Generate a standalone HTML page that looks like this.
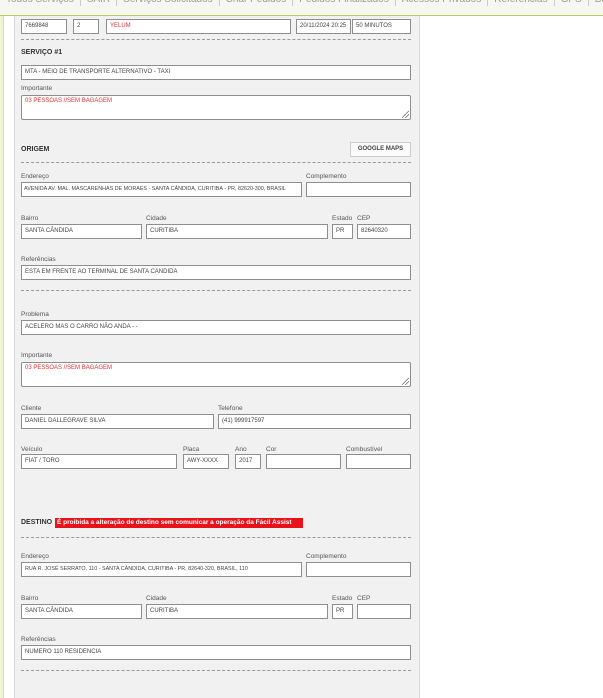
<!DOCTYPE html>
<html><head><meta charset="utf-8"><style>
*{box-sizing:border-box;margin:0;padding:0}
body{width:603px;height:698px;overflow:hidden;background:#fff;font-family:"Liberation Sans",sans-serif;position:relative}
.strip{position:absolute;left:0;top:0;width:4px;height:698px;background:#eef5d3;border-right:1px solid #d6e2a0}
.panel{position:absolute;left:14px;top:0;width:406px;height:698px;background:#f1f1f1;border-left:1px solid #d8d8d8;border-right:1px solid #d8d8d8}
.nav{position:absolute;left:0;top:0;width:603px;height:16px;background:#f7f7f2;border-bottom:1.5px solid #b9cc55;font-size:10px;color:#999;white-space:nowrap;overflow:hidden}
.nav div{position:absolute;left:0;top:-6px;line-height:12px}
.nav span{display:inline-block;padding:0 6px;border-right:1px solid #ccc}
.in{position:absolute;height:15px;background:#fff;border:1px solid #8e8e8e;font-size:6px;color:#444;line-height:13px;padding-left:3px;white-space:nowrap;overflow:hidden}
.ta{position:absolute;background:#fff;border:1px solid #8e8e8e;border-radius:2px;font-size:6px;color:#e03030;padding:2px 3px}
.red{color:#e03030}
.lb{position:absolute;font-size:6.5px;color:#555}
.h{position:absolute;font-size:7px;font-weight:bold;color:#333}
.dash{position:absolute;left:21px;width:390px;border-top:1px dashed #999}
.btn{position:absolute;left:350px;top:142px;width:61px;height:15px;background:#fafafa;border:1px solid #ccc;font-size:6px;font-weight:bold;color:#444;text-align:center;line-height:13px}
.warn{position:absolute;left:55px;top:518px;width:248px;height:10px;background:#e8121a;color:#fff;font-size:6.5px;font-weight:bold;line-height:10px;padding-left:2px;white-space:nowrap}
.grip{position:absolute;right:1px;bottom:1px;width:7px;height:7px;background:linear-gradient(135deg,transparent 45%,#666 45%,#666 52%,transparent 52%,transparent 70%,#666 70%,#666 77%,transparent 77%)}
.sm{font-size:5.4px}
</style></head><body>
<div class="strip"></div>
<div class="panel"></div>
<div class="nav"><div><span>Todos Serviços</span><span>SAIR</span><span>Serviços Solicitados</span><span>Criar Pedidos</span><span>Pedidos Finalizados</span><span>Acessos Privados</span><span>Referências</span><span>GPS</span><span>Buscar</span><span>Filiais</span><span>Fechar</span></div></div>

<div class="in" style="left:21px;top:19px;width:46px">7669848</div>
<div class="in" style="left:73px;top:19px;width:26px">2</div>
<div class="in red" style="left:106px;top:19px;width:185px">YELUM</div>
<div class="in" style="left:296px;top:19px;width:55px">20/11/2024 20:25</div>
<div class="in" style="left:352px;top:19px;width:59px">50 MINUTOS</div>
<div class="dash" style="top:39px"></div>
<div class="h" style="left:21px;top:49px">SERVIÇO #1</div>
<div class="in" style="left:21px;top:65px;width:390px">MTA - MEIO DE TRANSPORTE ALTERNATIVO - TAXI</div>
<div class="lb" style="left:21px;top:85px">Importante</div>
<div class="ta" style="left:21px;top:95px;width:390px;height:25px">03 PESSOAS //SEM BAGAGEM<div class="grip"></div></div>

<div class="h" style="left:21px;top:146px">ORIGEM</div>
<div class="btn">GOOGLE MAPS</div>
<div class="dash" style="top:162px"></div>
<div class="lb" style="left:21px;top:173px">Endereço</div>
<div class="lb" style="left:306px;top:173px">Complemento</div>
<div class="in sm" style="left:21px;top:182px;width:281px;padding-left:2px">AVENIDA AV. MAL. MASCARENHAS DE MORAES - SANTA CÂNDIDA, CURITIBA - PR, 82620-300, BRASIL</div>
<div class="in" style="left:306px;top:182px;width:105px"></div>
<div class="lb" style="left:21px;top:215px">Bairro</div>
<div class="lb" style="left:146px;top:215px">Cidade</div>
<div class="lb" style="left:332px;top:215px">Estado</div>
<div class="lb" style="left:357px;top:215px">CEP</div>
<div class="in" style="left:21px;top:224px;width:121px">SANTA CÂNDIDA</div>
<div class="in" style="left:146px;top:224px;width:182px">CURITIBA</div>
<div class="in" style="left:332px;top:224px;width:21px">PR</div>
<div class="in" style="left:357px;top:224px;width:54px">82640320</div>
<div class="lb" style="left:21px;top:256px">Referências</div>
<div class="in" style="left:21px;top:265px;width:390px">ESTA EM FRENTE AO TERMINAL DE SANTA CANDIDA</div>
<div class="dash" style="top:290px"></div>

<div class="lb" style="left:21px;top:311px">Problema</div>
<div class="in" style="left:21px;top:320px;width:390px">ACELERO MAS O CARRO NÃO ANDA - -</div>
<div class="lb" style="left:21px;top:352px">Importante</div>
<div class="ta" style="left:21px;top:362px;width:390px;height:25px">03 PESSOAS //SEM BAGAGEM<div class="grip"></div></div>
<div class="lb" style="left:21px;top:405px">Cliente</div>
<div class="lb" style="left:218px;top:405px">Telefone</div>
<div class="in" style="left:21px;top:414px;width:193px">DANIEL DALLEGRAVE SILVA</div>
<div class="in" style="left:218px;top:414px;width:193px">(41) 999917597</div>
<div class="lb" style="left:21px;top:446px">Veículo</div>
<div class="lb" style="left:183px;top:446px">Placa</div>
<div class="lb" style="left:235px;top:446px">Ano</div>
<div class="lb" style="left:266px;top:446px">Cor</div>
<div class="lb" style="left:346px;top:446px">Combustível</div>
<div class="in" style="left:21px;top:454px;width:156px">FIAT / TORO</div>
<div class="in" style="left:183px;top:454px;width:46px">AWY-XXXX</div>
<div class="in" style="left:235px;top:454px;width:26px">2017</div>
<div class="in" style="left:266px;top:454px;width:75px"></div>
<div class="in" style="left:346px;top:454px;width:65px"></div>

<div class="h" style="left:21px;top:519px">DESTINO</div>
<div class="warn">É proibida a alteração de destino sem comunicar a operação da Fácil Assist</div>
<div class="dash" style="top:537px"></div>
<div class="lb" style="left:21px;top:553px">Endereço</div>
<div class="lb" style="left:306px;top:553px">Complemento</div>
<div class="in sm" style="left:21px;top:562px;width:281px">RUA R. JOSÉ SERRATO, 110 - SANTA CÂNDIDA, CURITIBA - PR, 82640-320, BRASIL, 110</div>
<div class="in" style="left:306px;top:562px;width:105px"></div>
<div class="lb" style="left:21px;top:595px">Bairro</div>
<div class="lb" style="left:146px;top:595px">Cidade</div>
<div class="lb" style="left:332px;top:595px">Estado</div>
<div class="lb" style="left:357px;top:595px">CEP</div>
<div class="in" style="left:21px;top:604px;width:121px">SANTA CÂNDIDA</div>
<div class="in" style="left:146px;top:604px;width:182px">CURITIBA</div>
<div class="in" style="left:332px;top:604px;width:21px">PR</div>
<div class="in" style="left:357px;top:604px;width:54px"></div>
<div class="lb" style="left:21px;top:636px">Referências</div>
<div class="in" style="left:21px;top:645px;width:390px">NUMERO 110 RESIDENCIA</div>
<div class="dash" style="top:670px"></div>
</body></html>
